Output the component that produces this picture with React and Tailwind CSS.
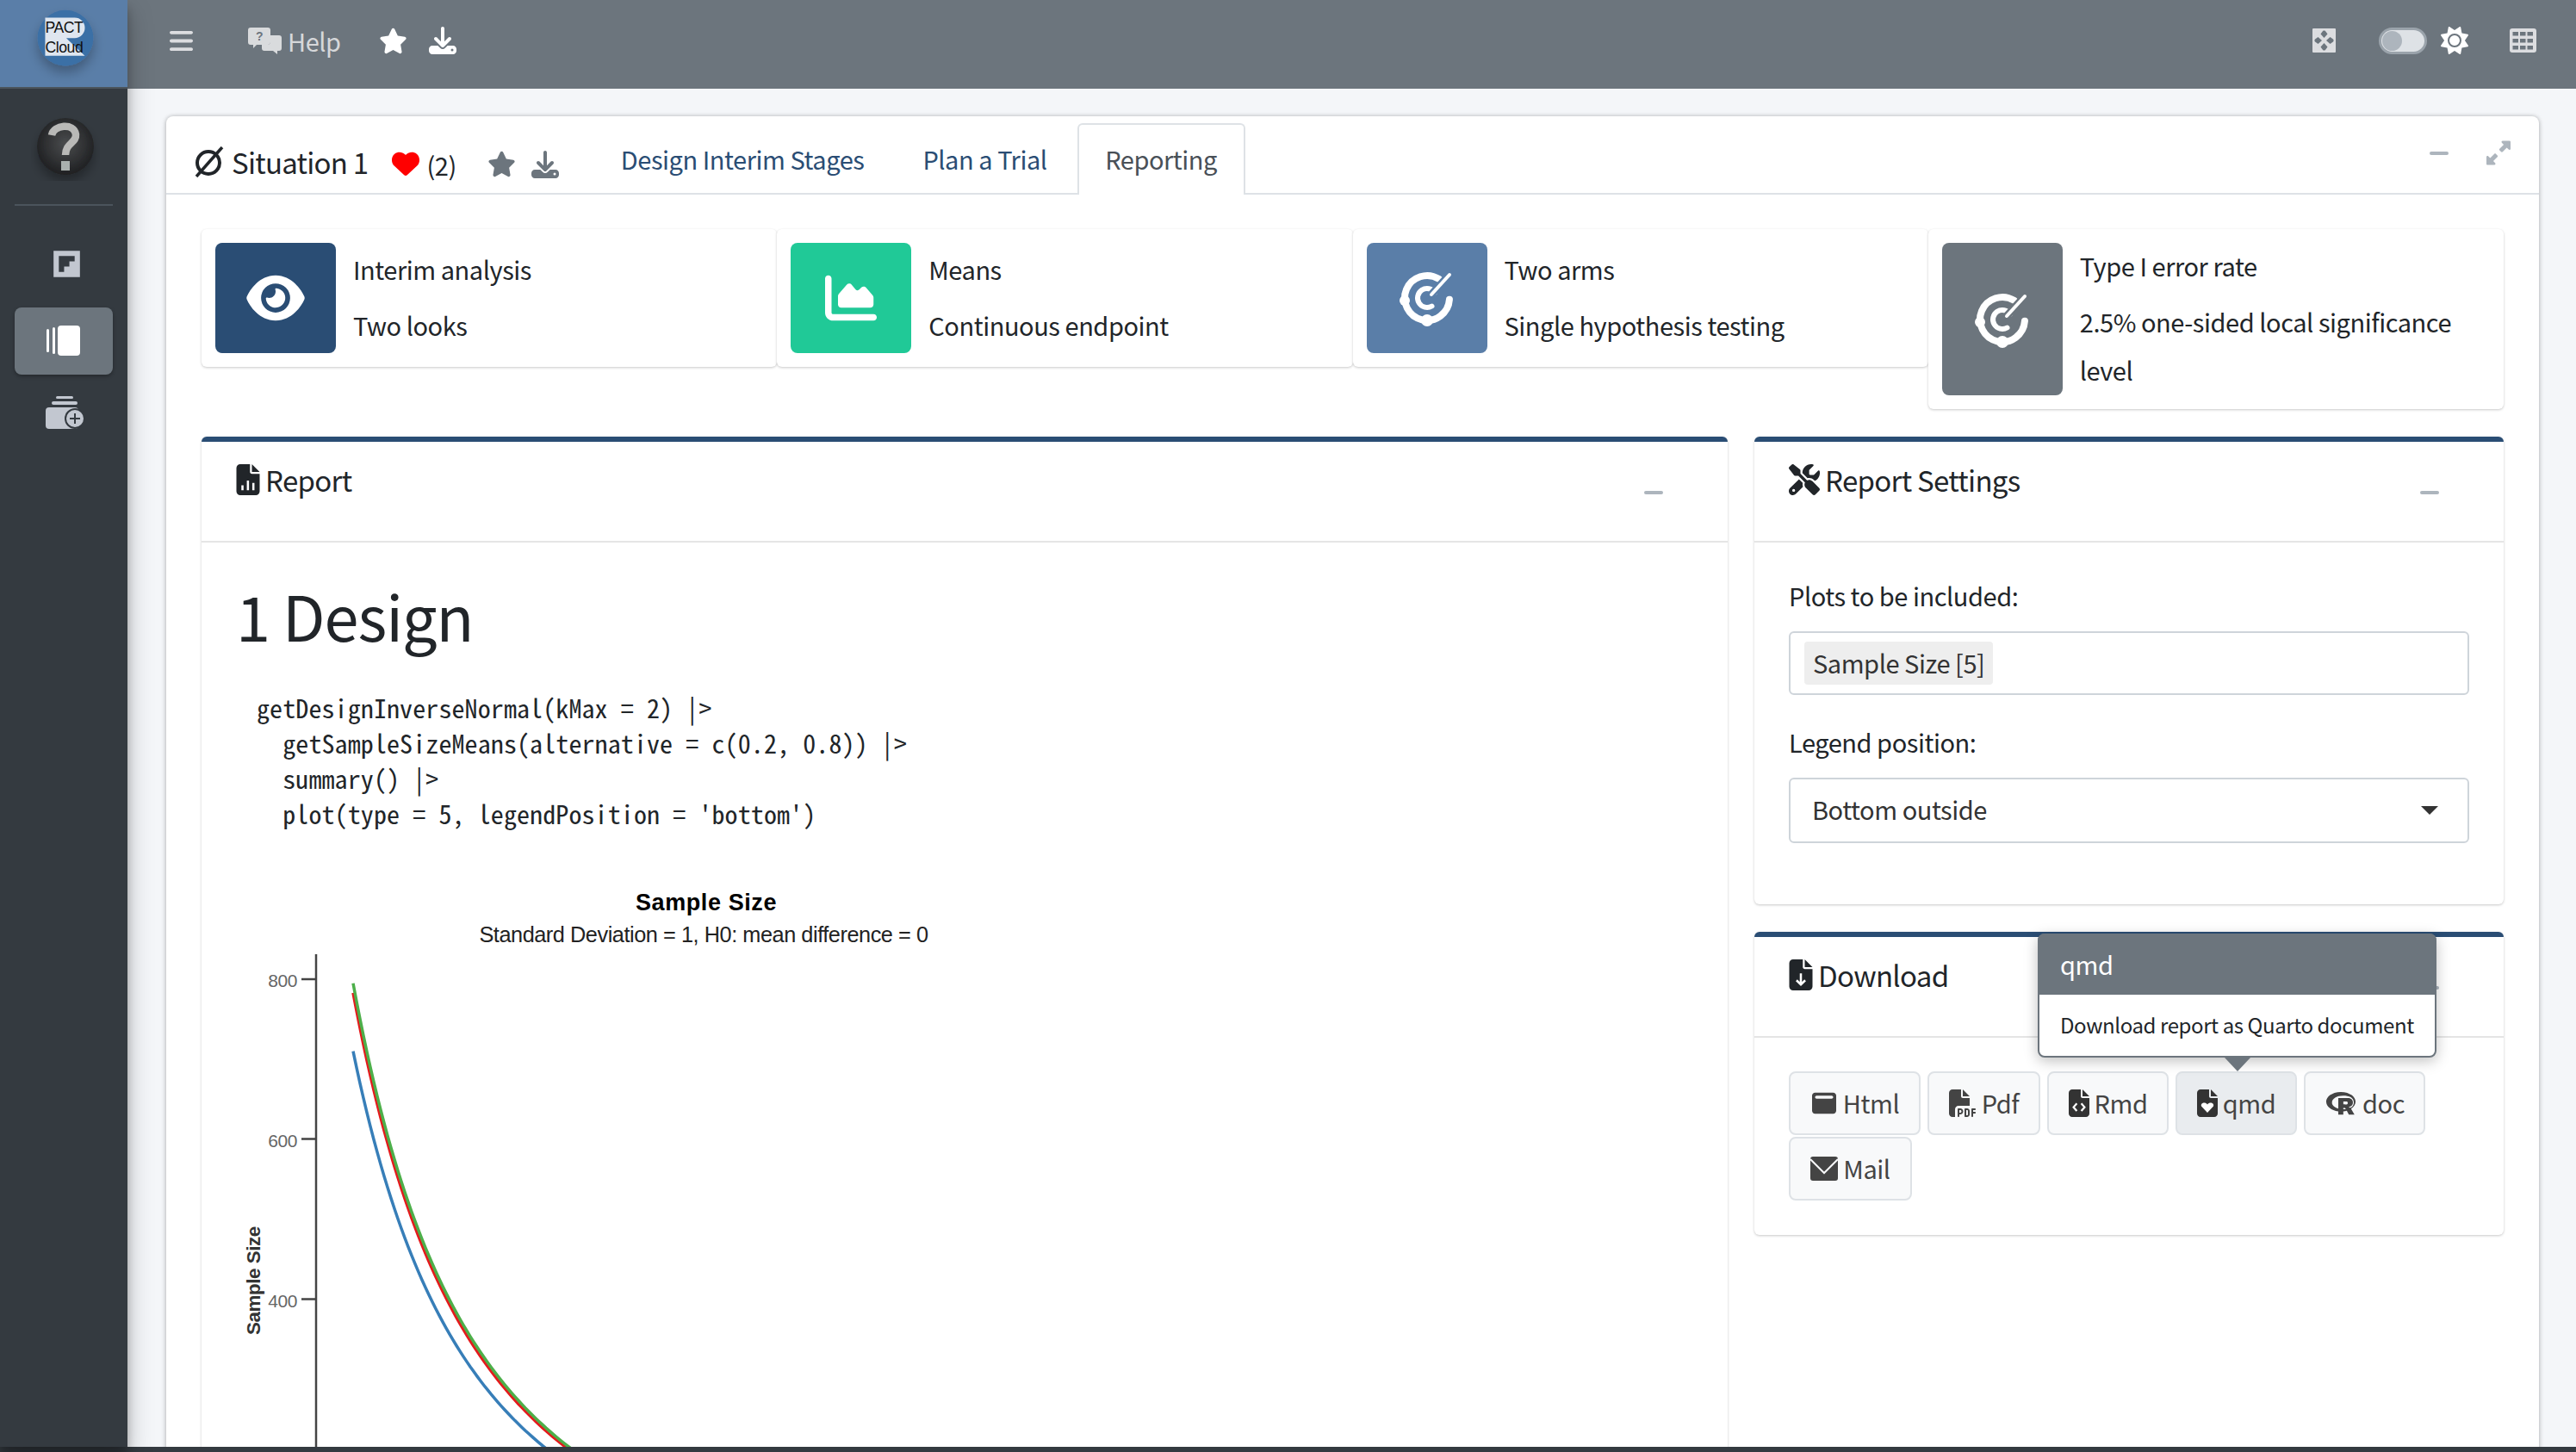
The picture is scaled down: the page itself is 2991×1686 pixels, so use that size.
import React from "react";
import {
  FaBars, FaStar, FaDownload, FaEye, FaChartArea, FaHeart, FaScrewdriverWrench,
  FaUpRightAndDownLeftFromCenter, FaFilePdf, FaRProject, FaSun, FaWindowMaximize, FaFlipboard,
} from "react-icons/fa6";

const FILE = "M0 64C0 28.7 28.7 0 64 0H224V128c0 17.7 14.3 32 32 32H384V448c0 35.3-28.7 64-64 64H64c-35.3 0-64-28.7-64-64V64zm384 64H256V0L384 128z";

function FileIcon({ className, children }) {
  return (
    <svg viewBox="0 0 384 512" className={className} fill="currentColor">
      <path d={FILE} />
      {children}
    </svg>
  );
}

function arc(r, a0, a1) {
  const p = (a) => [r * Math.cos((a * Math.PI) / 180), r * Math.sin((a * Math.PI) / 180)];
  const [x0, y0] = p(a0);
  const [x1, y1] = p(a1);
  const large = Math.abs(a1 - a0) > 180 ? 1 : 0;
  return `M${x0} ${y0}A${r} ${r} 0 ${large} 0 ${x1} ${y1}`;
}

// Sample size falls with the square of the effect size: n = K * (0.2 / delta)^2
function sampleCurve(K) {
  const pts = [];
  for (let x = 412; x <= 780; x += 4) {
    const delta = 0.2 + (x - 412) / 1364;
    const n = K * (0.2 / delta) ** 2;
    pts.push(`${x} ${(1137 + (800 - n) * 0.93).toFixed(1)}`);
  }
  return `M${pts.join("L")}`;
}

function TargetIcon({ bg }) {
  return (
    <svg viewBox="-36 -36 72 72" className="w-[72px] h-[72px]" fill="none" stroke="white" strokeLinecap="round">
      <path d={arc(26, -58, -356)} strokeWidth="8" />
      <circle cx="-26" cy="3" r="6" fill="white" stroke="none" />
      <circle cx="0" cy="26" r="7" fill="white" stroke="none" />
      <path d={arc(11, -35, -300)} strokeWidth="6" />
      <path d="M5 -4 L26 -27" stroke={bg} strokeWidth="9" />
      <path d="M5 -4 L26 -27" strokeWidth="4" />
    </svg>
  );
}

function Logo() {
  return (
    <svg viewBox="0 0 148 103" className="w-[148px] h-[101px]">
      <defs>
        <filter id="logoShadow" x="-30%" y="-30%" width="160%" height="170%">
          <feDropShadow dx="0" dy="8" stdDeviation="7" floodColor="#000" floodOpacity="0.28" />
        </filter>
      </defs>
      <circle cx="76" cy="45" r="33" fill="#3a6fa6" filter="url(#logoShadow)" />
      <path d="M52 21H87a12 12 0 0 1 0 24H77L99 66H52Z" fill="#dfe6ef" />
      <text x="52" y="39" fontSize="18" fontFamily="Liberation Sans" fill="#111">PACT</text>
      <text x="52" y="62" fontSize="18" fontFamily="Liberation Sans" fill="#111">Cloud</text>
    </svg>
  );
}

function HelpBall() {
  return (
    <svg viewBox="0 0 80 80" className="w-[80px] h-[80px]">
      <defs>
        <radialGradient id="ball" cx="50%" cy="45%" r="55%">
          <stop offset="0%" stopColor="#4a4c4e" />
          <stop offset="100%" stopColor="#1f2022" />
        </radialGradient>
        <filter id="ballShadow" x="-30%" y="-30%" width="160%" height="170%">
          <feDropShadow dx="0" dy="8" stdDeviation="6" floodColor="#000" floodOpacity="0.3" />
        </filter>
      </defs>
      <circle cx="40" cy="40" r="33" fill="url(#ball)" filter="url(#ballShadow)" />
      <path d="M24 27C26 15 50 12 52 26C53 36 40 36 40 50" fill="none" stroke="#b9b9b7" strokeWidth="8.5" />
      <rect x="35" y="57" width="10" height="11" fill="#a9b0ae" />
    </svg>
  );
}

function ActiveNavIcon() {
  return (
    <svg viewBox="0 0 40 36" className="w-[40px] h-[36px]" fill="white">
      <rect x="0" y="4" width="3" height="27" rx="1.5" />
      <rect x="7" y="2" width="3" height="31" rx="1.5" />
      <rect x="13" y="0" width="26" height="35" rx="4" />
    </svg>
  );
}

function AddNavIcon() {
  return (
    <svg viewBox="0 0 46 38" className="w-[46px] h-[38px]">
      <rect x="12" y="0" width="20" height="3" rx="1.5" fill="#c2c7d0" />
      <rect x="7" y="6" width="30" height="4" rx="2" fill="#c2c7d0" />
      <rect x="0" y="13" width="38" height="25" rx="4" fill="#c2c7d0" />
      <circle cx="34" cy="26" r="12" fill="#343a40" />
      <circle cx="34" cy="26" r="10" fill="#c2c7d0" />
      <path d="M34 20V32M28 26H40" stroke="#343a40" strokeWidth="2" />
    </svg>
  );
}

function HelpIcon() {
  return (
    <svg viewBox="0 0 39 31" className="w-[39px] h-[31px]">
      <path d="M3 0H23a3 3 0 0 1 3 3V17a3 3 0 0 1-3 3H10L6 24V20H3a3 3 0 0 1-3-3V3A3 3 0 0 1 3 0Z" fill="#d9dbdd" />
      <path d="M18 9H36a3 3 0 0 1 3 3V24a3 3 0 0 1-3 3H34V31L29 27H19a3 3 0 0 1-3-3V20H24L26 18V10Z" fill="#d9dbdd" />
      <text x="13" y="15" textAnchor="middle" fontSize="14" fontWeight="700" fontFamily="Liberation Sans" fill="#6c757d">?</text>
    </svg>
  );
}

function ExpandSquare() {
  return (
    <svg viewBox="0 0 27 28" className="w-[27px] h-[28px]">
      <rect width="27" height="28" rx="1" fill="#dcdde0" />
      <path d="M13.500 1L17.500 6.500L13.500 11L9.500 6.500ZM13.500 27L17.500 21.500L13.500 17L9.500 21.500ZM1 14L6.500 10L11 14L6.500 18ZM26 14L20.500 10L16 14L20.500 18Z" fill="#6c757d" />
      <path d="M13.500 0L11 2.500H16ZM13.500 28L11 25.500H16ZM0 14L2.500 11.500V16.500ZM27 14L24.500 11.500V16.500Z" fill="#dcdde0" />
    </svg>
  );
}

function GridIcon() {
  const cells = [];
  for (let r = 0; r < 3; r++) for (let c = 0; c < 3; c++) cells.push([3.500 + c * 8.500, 4 + r * 8]);
  return (
    <svg viewBox="0 0 31 28" className="w-[31px] h-[28px]">
      <rect width="31" height="28" rx="3" fill="#dcdde0" />
      {cells.map(([x, y]) => (
        <rect key={`${x}-${y}`} x={x} y={y} width="6.500" height="4.500" fill="#6c757d" />
      ))}
    </svg>
  );
}

function InfoBox({ bg, icon, children }) {
  return (
    <div className="flex gap-5 p-4 bg-white rounded-[6px] shadow-[0_1px_3px_rgba(0,0,0,0.22)]">
      <div className={`${bg} w-[140px] min-h-[128px] shrink-0 rounded-[8px] flex items-center justify-center`}>{icon}</div>
      <div className="self-center text-[29px] leading-[56px] text-[#212529] flex flex-col gap-[9px] -translate-y-[2px]">{children}</div>
    </div>
  );
}

function Panel({ icon, title, children, className = "" }) {
  return (
    <section className={`relative bg-white rounded-[6px] border-t-[6px] border-t-[#2a4d74] shadow-[0_1px_3px_rgba(0,0,0,0.22)] ${className}`}>
      <div className="h-[117px] border-b-2 border-[#e5e5e5] flex items-start justify-between pl-[40px] pr-[75px] pt-[22px]">
        <div className="flex items-center gap-[6px] text-[33px] leading-[44px] tracking-[-0.7px] text-[#212529]">
          {icon}
          <span>{title}</span>
        </div>
        <div className="w-[22px] h-[4px] mt-[35px] rounded-full bg-[#adb5bd]" />
      </div>
      {children}
    </section>
  );
}

function DlButton({ icon, label, w, active }) {
  return (
    <button className={`${w} ${active ? "bg-[#e9ecef]" : "bg-[#f8f9fa]"} h-[74px] border-2 border-[#dee2e6] rounded-[8px] flex items-center justify-center gap-[6px] text-[29px] text-[#444]`}>
      {icon}
      <span>{label}</span>
    </button>
  );
}

function Chart() {
  return (
    <svg viewBox="276 1020 900 705" className="block w-[900px] h-[705px] mt-[55px]" fontFamily="Liberation Sans">
      <text x="822" y="1057" textAnchor="middle" fontSize="27" fontWeight="700" fill="#000" letterSpacing="0.6">Sample Size</text>
      <text x="819" y="1094" textAnchor="middle" fontSize="25.300" fill="#222">Standard Deviation = 1, H0: mean difference = 0</text>
      <path d="M369 1108V1725M352 1137H369M352 1322.500H369M352 1508.500H369" stroke="#444" strokeWidth="2.500" fill="none" />
      <text x="347" y="1146" textAnchor="end" fontSize="21" fill="#666">800</text>
      <text x="347" y="1332" textAnchor="end" fontSize="21" fill="#666">600</text>
      <text x="347" y="1518" textAnchor="end" fontSize="21" fill="#666">400</text>
      <text transform="rotate(-90 304 1487)" x="304" y="1487" textAnchor="middle" fontSize="22.400" fontWeight="700" fill="#333">Sample Size</text>
      <path d={sampleCurve(710)} stroke="#377eb8" strokeWidth="3.500" fill="none" />
      <path d={sampleCurve(783)} stroke="#e41a1c" strokeWidth="3.500" fill="none" />
      <path d={sampleCurve(795)} stroke="#4daf4a" strokeWidth="3.500" fill="none" />
    </svg>
  );
}

export default function App() {
  return (
    <div className="w-[2991px] h-[1686px] flex flex-col overflow-hidden tracking-[-0.45px] font-['Noto_Sans_CJK_SC','Noto_Sans',sans-serif]">
      <div className="flex flex-1 min-h-0">
        <aside className="relative z-10 w-[148px] shrink-0 bg-[#343a40] shadow-[0_14px_28px_rgba(0,0,0,0.25),0_10px_10px_rgba(0,0,0,0.22)]">
          <div className="h-[103px] bg-[#5a7ea8] border-b-2 border-[#4b545c]"><Logo /></div>
          <div className="flex justify-center pt-[27px] pl-[4px]"><HelpBall /></div>
          <div className="mx-[17px] mt-[27px] h-[2px] bg-[#4b545c]" />
          <div className="flex flex-col items-center px-[17px]">
            <FaFlipboard className="mt-[50px] ml-[6px] w-[31px] h-[35px] text-[#c2c7d0]" />
            <div className="mt-[33px] w-full h-[78px] rounded-[8px] bg-[#6c757d] flex items-center justify-center shadow-[0_2px_4px_rgba(0,0,0,0.3)]">
              <ActiveNavIcon />
            </div>
            <div className="mt-[25px] ml-[4px]"><AddNavIcon /></div>
          </div>
        </aside>

        <main className="flex-1 min-w-0 flex flex-col">
          <header className="h-[103px] shrink-0 bg-[#6c757d] flex items-center pl-[49px] pr-[46px] pb-[9px]">
            <FaBars className="w-[27px] h-[31px] text-[#dcdde0]" />
            <div className="ml-[64px] flex items-center gap-[7px]">
              <HelpIcon />
              <span className="text-[29px] leading-[40px] text-[#d6d8da]">Help</span>
            </div>
            <FaStar className="ml-[44px] w-[33px] h-[31px] text-white" />
            <FaDownload className="ml-[25px] w-[32px] h-[32px] text-white" />
            <div className="flex-1" />
            <ExpandSquare />
            <div className="ml-[50px] w-[56px] h-[31px] rounded-full bg-[#dee2e6] border-[3px] border-[#9aa3ab] flex items-center pl-[1px]">
              <div className="w-[23px] h-[23px] rounded-full bg-[#adb5bd]" />
            </div>
            <FaSun className="ml-[16px] w-[32px] h-[32px] text-white" />
            <div className="ml-[48px]"><GridIcon /></div>
          </header>

          <div className="flex-1 min-h-0 overflow-hidden bg-[#f4f6f9] pl-[45px] pr-[43px] pt-[32px]">
            <div className="bg-white rounded-t-[8px] min-h-full shadow-[0_0_4px_rgba(0,0,0,0.15),0_1px_6px_rgba(0,0,0,0.2)]">
              <div className="relative h-[91px] border-b-2 border-[#dee2e6] flex items-end pl-[32px]">
                <div className="flex items-center h-[89px] pt-[17px]">
                  <svg viewBox="0 0 36 36" className="w-[36px] h-[36px] text-[#212529]" fill="none" stroke="currentColor" strokeWidth="4">
                    <circle cx="17" cy="19" r="13" />
                    <path d="M3 35L33 1" strokeWidth="3.500" />
                  </svg>
                  <span className="ml-[8px] text-[33px] leading-[44px] tracking-[-0.75px] text-[#212529]">Situation 1</span>
                  <FaHeart className="ml-[28px] mt-[4px] w-[32px] h-[32px] text-[#ff0000]" />
                  <span className="ml-[8px] mt-[6px] text-[29px] leading-[40px] text-[#212529]">(2)</span>
                  <FaStar className="ml-[36px] mt-[5px] w-[33px] h-[31px] text-[#6c757d]" />
                  <FaDownload className="ml-[18px] mt-[5px] w-[32px] h-[32px] text-[#6c757d]" />
                </div>
                <div className="ml-[72px] flex items-end h-[82px]">
                  <div className="text-[29px] leading-[40px] text-[#2a4d74] h-[72px] pt-[12px]">Design Interim Stages</div>
                  <div className="ml-[68px] text-[29px] leading-[40px] text-[#2a4d74] h-[72px] pt-[12px]">Plan a Trial</div>
                  <div className="ml-[35px] w-[195px] h-[83px] -mb-[2px] pt-[19px] text-center text-[29px] leading-[40px] text-[#495057] bg-white border-2 border-b-0 border-[#dee2e6] rounded-t-[6px]">Reporting</div>
                </div>
                <div className="absolute right-[105px] top-[41px] w-[22px] h-[4px] rounded-full bg-[#adb5bd]" />
                <FaUpRightAndDownLeftFromCenter className="absolute right-[33px] top-[28px] w-[28px] h-[29px] text-[#adb5bd]" />
              </div>

              <div className="px-[41px] pt-[40px]">
                <div className="grid grid-cols-4 items-start">
                  <InfoBox bg="bg-[#2a4d74]" icon={<FaEye className="w-[68px] h-[60px] text-white" />}>
                    <p>Interim analysis</p>
                    <p>Two looks</p>
                  </InfoBox>
                  <InfoBox bg="bg-[#20c997]" icon={<FaChartArea className="w-[60px] h-[62px] text-white" />}>
                    <p>Means</p>
                    <p>Continuous endpoint</p>
                  </InfoBox>
                  <InfoBox bg="bg-[#5a7ea8]" icon={<TargetIcon bg="#5a7ea8" />}>
                    <p>Two arms</p>
                    <p>Single hypothesis testing</p>
                  </InfoBox>
                  <InfoBox bg="bg-[#6c757d]" icon={<TargetIcon bg="#6c757d" />}>
                    <p>Type I error rate</p>
                    <p>2.5% one-sided local significance level</p>
                  </InfoBox>
                </div>

                <div className="mt-[32px] flex items-start gap-[31px]">
                  <Panel
                    className="w-[1772px] shrink-0"
                    title="Report"
                    icon={
                      <FileIcon className="w-[28px] h-[36px] text-[#212529]">
                        <path d="M100 430V350M190 430V270M280 430V310" stroke="white" strokeWidth="36" />
                      </FileIcon>
                    }
                  >
                    <div className="px-[40px] pt-[44px]">
                      <h1 className="text-[72px] leading-[80px] tracking-[-1px] text-[#212529]">1 Design</h1>
                      <pre className="mt-[47px] pl-[24px] text-[30px] leading-[41px] tracking-[0.1px] text-[#212529] font-['Noto_Sans_Mono_CJK_SC','DejaVu_Sans_Mono',monospace]">
{`getDesignInverseNormal(kMax = 2) |>
  getSampleSizeMeans(alternative = c(0.2, 0.8)) |>
  summary() |>
  plot(type = 5, legendPosition = 'bottom')`}
                      </pre>
                      <Chart />
                    </div>
                  </Panel>

                  <div className="flex-1 min-w-0 flex flex-col gap-[32px]">
                    <Panel
                      className="h-[543px]"
                      title="Report Settings"
                      icon={<FaScrewdriverWrench className="w-[36px] h-[36px] text-[#212529]" />}
                    >
                      <div className="px-[40px] pt-[41px] text-[29px] text-[#212529]">
                        <label className="block leading-[40px]">Plots to be included:</label>
                        <div className="mt-[22px] h-[74px] border-2 border-[#ced4da] rounded-[6px] flex items-center px-[16px]">
                          <span className="h-[50px] px-[10px] bg-[#eeeeee] rounded-[4px] text-[#333] leading-[48px]">Sample Size [5]</span>
                        </div>
                        <label className="block mt-[34px] leading-[40px]">Legend position:</label>
                        <div className="mt-[22px] h-[76px] border-2 border-[#ced4da] rounded-[6px] flex items-center justify-between pl-[25px] pr-[34px] text-[#333]">
                          <span className="-translate-y-[1px]">Bottom outside</span>
                          <span className="w-0 h-0 border-x-[10px] border-x-transparent border-t-[10px] border-t-[#333]" />
                        </div>
                      </div>
                    </Panel>

                    <Panel
                      className="h-[352px]"
                      title="Download"
                      icon={
                        <FileIcon className="w-[28px] h-[36px] text-[#212529]">
                          <path d="M192 230V410M120 345L192 415L264 345" stroke="white" strokeWidth="36" fill="none" />
                        </FileIcon>
                      }
                    >
                      <div className="px-[40px] pt-[39px] flex flex-wrap gap-x-[8px] gap-y-[2px]">
                        <DlButton w="w-[153px]" label="Html" icon={<FaWindowMaximize className="w-[32px] h-[28px] text-[#444]" />} />
                        <DlButton w="w-[131px]" label="Pdf" icon={<FaFilePdf className="w-[32px] h-[34px] text-[#444]" />} />
                        <DlButton
                          w="w-[141px]"
                          label="Rmd"
                          icon={
                            <FileIcon className="w-[24px] h-[32px] text-[#333]">
                              <path d="M150 260L90 330L150 400M234 260L294 330L234 400" stroke="white" strokeWidth="36" fill="none" />
                            </FileIcon>
                          }
                        />
                        <DlButton
                          w="w-[141px]"
                          active
                          label="qmd"
                          icon={
                            <FileIcon className="w-[24px] h-[32px] text-[#333]">
                              <path d="M192 430L80 310C60 250 150 220 192 280C234 220 324 250 304 310Z" fill="white" />
                            </FileIcon>
                          }
                        />
                        <DlButton w="w-[141px]" label="doc" icon={<FaRProject className="w-[38px] h-[30px] text-[#444]" />} />
                        <button className="w-[143px] h-[74px] bg-[#f8f9fa] border-2 border-[#dee2e6] rounded-[8px] flex items-center justify-center gap-[6px] text-[29px] text-[#444]">
                          <svg viewBox="0 0 32 28" className="w-[32px] h-[28px]">
                            <rect width="32" height="28" rx="3" fill="#444" />
                            <path d="M0 3L16 19L32 3" stroke="#f8f9fa" strokeWidth="2" fill="none" />
                          </svg>
                          <span>Mail</span>
                        </button>
                      </div>

                      <div className="absolute left-[329px] -top-[4px] w-[463px] h-[144px] bg-white rounded-[8px] border-2 border-[#6c757d] shadow-[0_4px_16px_rgba(0,0,0,0.25)]">
                        <div className="h-[71px] -m-[2px] mb-0 bg-[#6c757d] rounded-t-[8px] pl-[26px] text-white text-[29px] leading-[71px]">qmd</div>
                        <div className="pl-[24px] pt-[15px] text-[24px] tracking-[-0.4px] leading-[40px] text-[#212529] whitespace-nowrap">Download report as Quarto document</div>
                        <div className="absolute left-[215px] -bottom-[18px] w-0 h-0 border-x-[15px] border-x-transparent border-t-[16px] border-t-[#6c757d]" />
                      </div>
                    </Panel>
                  </div>
                </div>
              </div>
            </div>
          </div>
        </main>
      </div>
      <div className="h-[6px] shrink-0 bg-[#343a40]" />
    </div>
  );
}
